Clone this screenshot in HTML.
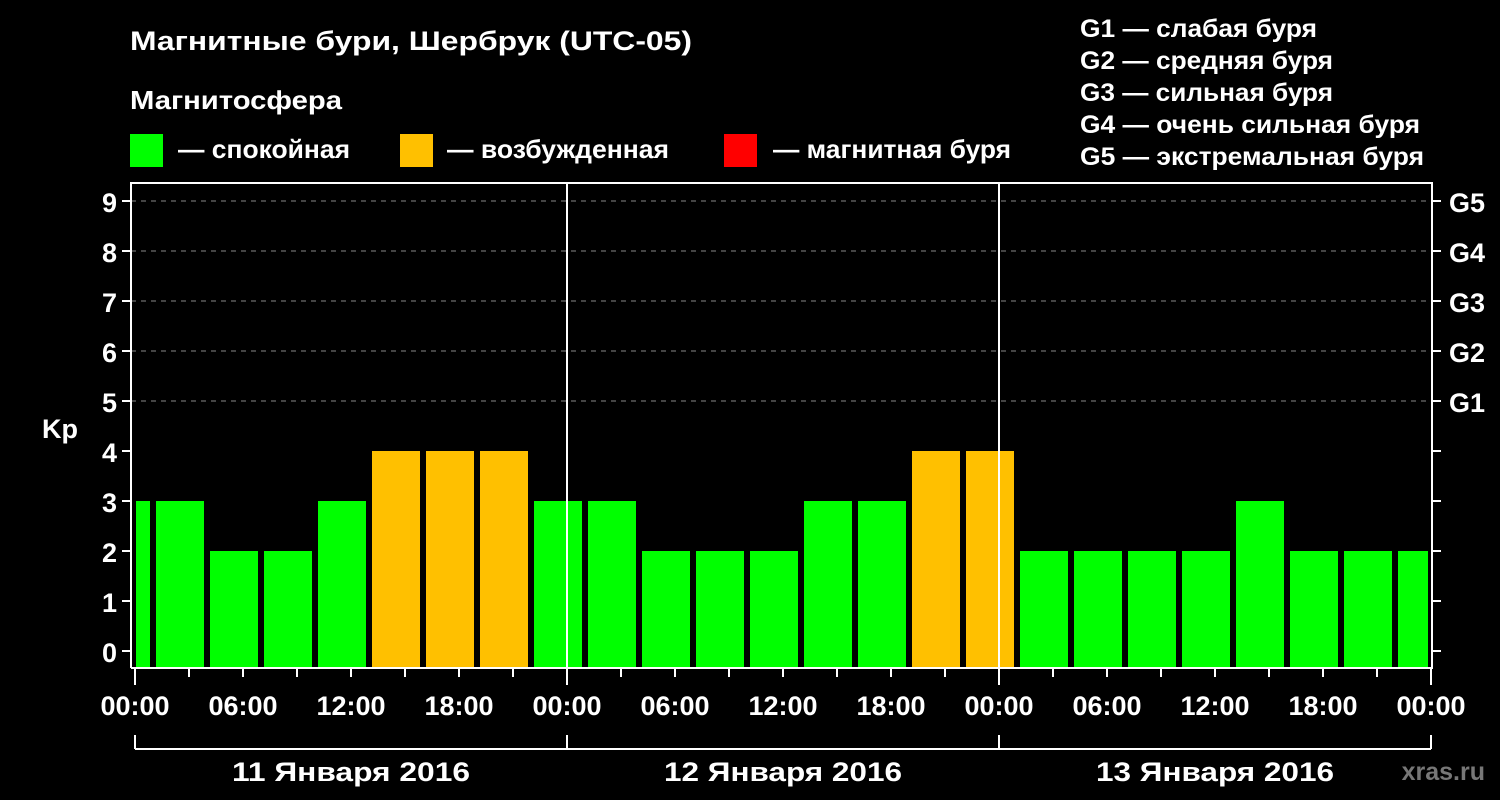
<!DOCTYPE html>
<html><head><meta charset="utf-8"><style>
html,body{margin:0;padding:0;background:#000;}
svg{display:block;font-family:"Liberation Sans",sans-serif;font-weight:bold;}
</style></head><body>
<svg width="1500" height="800" viewBox="0 0 1500 800">
<rect width="1500" height="800" fill="#000"/>
<g fill="#fff">
<text x="130" y="50" font-size="27" textLength="562" lengthAdjust="spacingAndGlyphs">Магнитные бури, Шербрук (UTC-05)</text>
<text x="130" y="109" font-size="26" textLength="212" lengthAdjust="spacingAndGlyphs">Магнитосфера</text>
<text x="178" y="158" font-size="26" textLength="172" lengthAdjust="spacingAndGlyphs">— спокойная</text>
<text x="447" y="158" font-size="26" textLength="222" lengthAdjust="spacingAndGlyphs">— возбужденная</text>
<text x="773" y="158" font-size="26" textLength="238" lengthAdjust="spacingAndGlyphs">— магнитная буря</text>
<g font-size="25">
<text x="1080" y="37" textLength="237" lengthAdjust="spacingAndGlyphs">G1 — слабая буря</text>
<text x="1080" y="69" textLength="253" lengthAdjust="spacingAndGlyphs">G2 — средняя буря</text>
<text x="1080" y="101" textLength="253" lengthAdjust="spacingAndGlyphs">G3 — сильная буря</text>
<text x="1080" y="133" textLength="340" lengthAdjust="spacingAndGlyphs">G4 — очень сильная буря</text>
<text x="1080" y="165" textLength="344" lengthAdjust="spacingAndGlyphs">G5 — экстремальная буря</text>
</g>
</g>
<rect x="130" y="134" width="33" height="33" fill="#00ff00"/>
<rect x="400" y="134" width="33" height="33" fill="#ffc000"/>
<rect x="724" y="134" width="33" height="33" fill="#ff0000"/>
<g stroke="#888" stroke-width="1" stroke-dasharray="5,5">
<line x1="131" y1="201" x2="1432" y2="201"/>
<line x1="131" y1="251" x2="1432" y2="251"/>
<line x1="131" y1="301" x2="1432" y2="301"/>
<line x1="131" y1="351" x2="1432" y2="351"/>
<line x1="131" y1="401" x2="1432" y2="401"/>
</g>
<g>
<rect x="136" y="501" width="14" height="166" fill="#00ff00"/>
<rect x="156" y="501" width="48" height="166" fill="#00ff00"/>
<rect x="210" y="551" width="48" height="116" fill="#00ff00"/>
<rect x="264" y="551" width="48" height="116" fill="#00ff00"/>
<rect x="318" y="501" width="48" height="166" fill="#00ff00"/>
<rect x="372" y="451" width="48" height="216" fill="#ffc000"/>
<rect x="426" y="451" width="48" height="216" fill="#ffc000"/>
<rect x="480" y="451" width="48" height="216" fill="#ffc000"/>
<rect x="534" y="501" width="48" height="166" fill="#00ff00"/>
<rect x="588" y="501" width="48" height="166" fill="#00ff00"/>
<rect x="642" y="551" width="48" height="116" fill="#00ff00"/>
<rect x="696" y="551" width="48" height="116" fill="#00ff00"/>
<rect x="750" y="551" width="48" height="116" fill="#00ff00"/>
<rect x="804" y="501" width="48" height="166" fill="#00ff00"/>
<rect x="858" y="501" width="48" height="166" fill="#00ff00"/>
<rect x="912" y="451" width="48" height="216" fill="#ffc000"/>
<rect x="966" y="451" width="48" height="216" fill="#ffc000"/>
<rect x="1020" y="551" width="48" height="116" fill="#00ff00"/>
<rect x="1074" y="551" width="48" height="116" fill="#00ff00"/>
<rect x="1128" y="551" width="48" height="116" fill="#00ff00"/>
<rect x="1182" y="551" width="48" height="116" fill="#00ff00"/>
<rect x="1236" y="501" width="48" height="166" fill="#00ff00"/>
<rect x="1290" y="551" width="48" height="116" fill="#00ff00"/>
<rect x="1344" y="551" width="48" height="116" fill="#00ff00"/>
<rect x="1398" y="551" width="30" height="116" fill="#00ff00"/>
</g>
<g stroke="#fff" stroke-width="2" fill="none">
<polyline points="131,668 131,183 1432,183 1432,668 131,668"/>
<line x1="567" y1="183" x2="567" y2="668"/>
<line x1="999" y1="183" x2="999" y2="668"/>
<line x1="135" y1="749" x2="1431" y2="749"/>
<line x1="135" y1="735" x2="135" y2="749"/>
<line x1="567" y1="735" x2="567" y2="749"/>
<line x1="999" y1="735" x2="999" y2="749"/>
<line x1="1431" y1="735" x2="1431" y2="749"/>
<path d="M122 651H131M122 601H131M122 551H131M122 501H131M122 451H131M122 401H131M122 351H131M122 301H131M122 251H131M122 201H131"/>
<path d="M1432 651H1441M1432 601H1441M1432 551H1441M1432 501H1441M1432 451H1441M1432 401H1441M1432 351H1441M1432 301H1441M1432 251H1441M1432 201H1441"/>
<path d="M135 668V685M189 668V677M243 668V677M297 668V677M351 668V677M405 668V677M459 668V677M513 668V677M567 668V685M621 668V677M675 668V677M729 668V677M783 668V677M837 668V677M891 668V677M945 668V677M999 668V685M1053 668V677M1107 668V677M1161 668V677M1215 668V677M1269 668V677M1323 668V677M1377 668V677M1431 668V685"/>
</g>
<g fill="#fff" font-size="27" text-anchor="end">
<text x="117" y="662">0</text><text x="117" y="612">1</text><text x="117" y="562">2</text>
<text x="117" y="512">3</text><text x="117" y="462">4</text><text x="117" y="412">5</text>
<text x="117" y="362">6</text><text x="117" y="312">7</text><text x="117" y="262">8</text>
<text x="117" y="212">9</text>
</g>
<text x="42" y="438" fill="#fff" font-size="27">Kp</text>
<g fill="#fff" font-size="27">
<text x="1449" y="412">G1</text><text x="1449" y="362">G2</text><text x="1449" y="312">G3</text>
<text x="1449" y="262">G4</text><text x="1449" y="212">G5</text>
</g>
<g fill="#fff" font-size="27" text-anchor="middle">
<text x="135" y="715">00:00</text><text x="243" y="715">06:00</text><text x="351" y="715">12:00</text><text x="459" y="715">18:00</text>
<text x="567" y="715">00:00</text><text x="675" y="715">06:00</text><text x="783" y="715">12:00</text><text x="891" y="715">18:00</text>
<text x="999" y="715">00:00</text><text x="1107" y="715">06:00</text><text x="1215" y="715">12:00</text><text x="1323" y="715">18:00</text>
<text x="1431" y="715">00:00</text>
<text x="351" y="781" textLength="238" lengthAdjust="spacingAndGlyphs">11 Января 2016</text>
<text x="783" y="781" textLength="238" lengthAdjust="spacingAndGlyphs">12 Января 2016</text>
<text x="1215" y="781" textLength="238" lengthAdjust="spacingAndGlyphs">13 Января 2016</text>
</g>
<text x="1485" y="780" fill="#777" font-size="25" text-anchor="end">xras.ru</text>
</svg>
</body></html>
